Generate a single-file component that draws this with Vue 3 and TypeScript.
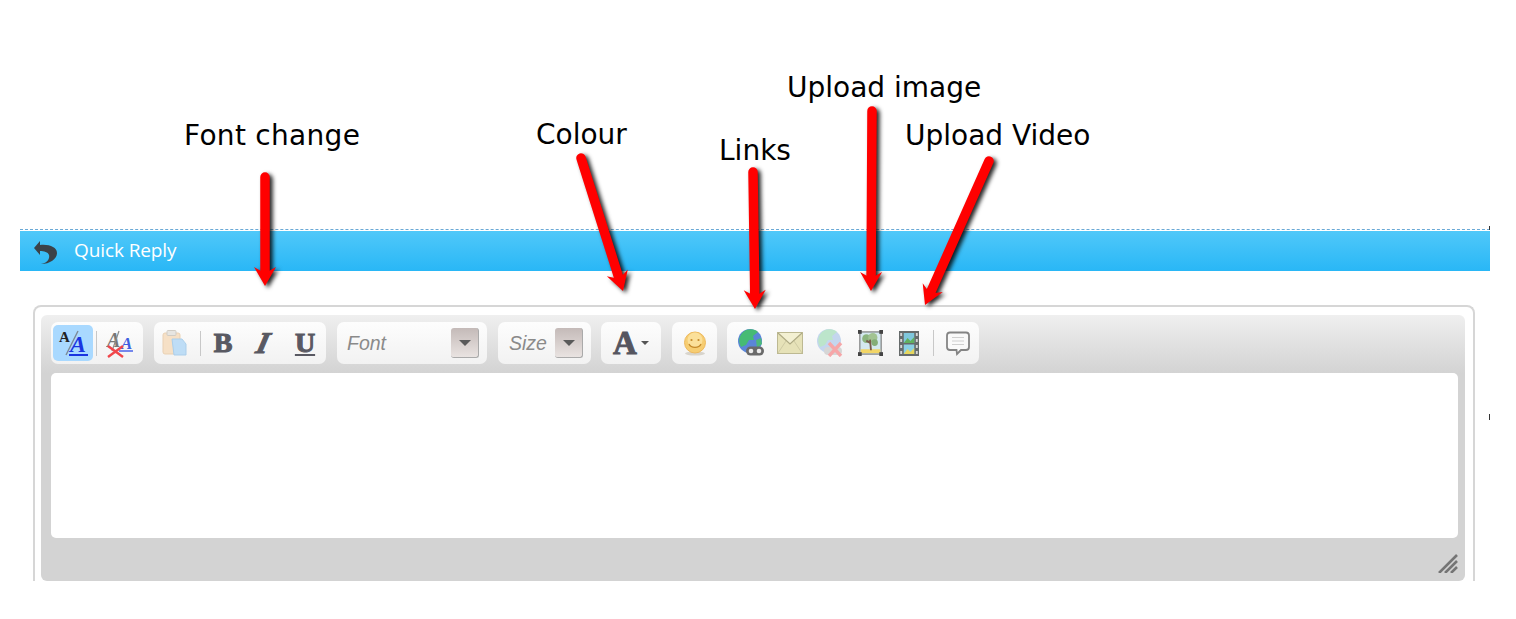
<script setup lang="ts">
interface Arrow { x1: number; y1: number; x2: number; y2: number }
const arrowData: Arrow[] = [
  { x1: 265, y1: 177, x2: 265, y2: 286 },
  { x1: 581, y1: 158, x2: 623, y2: 291 },
  { x1: 753, y1: 172, x2: 755, y2: 309 },
  { x1: 872, y1: 111, x2: 871, y2: 291 },
  { x1: 989, y1: 161, x2: 925, y2: 305 },
]
const arrows = arrowData.map((a) => {
  const dx = a.x2 - a.x1
  const dy = a.y2 - a.y1
  const len = Math.hypot(dx, dy)
  const ux = dx / len
  const uy = dy / len
  const pt = (back: number, side: number) =>
    `${(a.x2 - ux * back - uy * side).toFixed(1)},${(a.y2 - uy * back + ux * side).toFixed(1)}`
  return {
    ...a,
    sx: a.x2 - ux * 12,
    sy: a.y2 - uy * 12,
    head: [pt(0, 0), pt(19, 11), pt(15, 4), pt(15, -4), pt(19, -11)].join(' '),
  }
})
const labels = [
  { text: 'Font change', cls: 'l-font' },
  { text: 'Colour', cls: 'l-colour' },
  { text: 'Links', cls: 'l-links' },
  { text: 'Upload image', cls: 'l-image' },
  { text: 'Upload Video', cls: 'l-video' },
]
</script>

<template>
  <div class="page">
    <header class="bar">
      <svg class="back" width="26" height="28" viewBox="0 0 26 28">
        <path d="M1 9 L7 2 L7 6 C16 5 24 8 24 14 C24 20 17 25 8 25 C14 24 17 20 16 16 C15 13 11 12 7 12 L7 16 Z" fill="#3b4248" />
      </svg>
      <span class="bar-title">Quick Reply</span>
    </header>

    <section class="box">
      <div class="editor">
        <div class="toolbar">
          <div class="group g1">
            <span class="btn active">
              <svg width="32" height="30" viewBox="0 0 32 30">
                <text x="2" y="14" class="ser small">A</text>
                <path d="M21 3 L9 27" stroke="#7d8a96" stroke-width="1.4" />
                <text x="13" y="24" class="ser blue">A</text>
                <path d="M12 27 H31" stroke="#1a35e0" stroke-width="2" />
              </svg>
            </span>
            <i class="sep"></i>
            <span class="btn s2">
              <svg width="28" height="30" viewBox="0 0 28 30">
                <text x="1" y="19" class="ser grey">A</text>
                <path d="M13 3 L6 23" stroke="#8a8a8a" stroke-width="1.2" />
                <text x="15" y="21" class="ser blue2">A</text>
                <path d="M13 23 H27" stroke="#4a62e8" stroke-width="1.6" />
                <path d="M2 18 L17 29 M17 18 L2 29" stroke="#f0454a" stroke-width="2.4" />
              </svg>
            </span>
          </div>

          <div class="group g2">
            <span class="btn paste">
              <svg width="26" height="28" viewBox="0 0 26 28">
                <rect x="1" y="4" width="17" height="21" rx="2" fill="#f6dfc4" stroke="#e9cfb0" />
                <rect x="5" y="1.5" width="9" height="5" rx="1" fill="#e6e4e0" stroke="#cfcac2" />
                <path d="M10 10 H20 L24 15 V26 H12 Z" fill="#bcdcf6" stroke="#a8cdea" />
              </svg>
            </span>
            <i class="sep"></i>
            <span class="fmt b">B</span>
            <span class="fmt it">I</span>
            <span class="fmt u">U</span>
          </div>

          <div class="group g3">
            <span class="select-label">Font</span>
            <span class="drop"><b class="tri"></b></span>
          </div>

          <div class="group g4">
            <span class="select-label">Size</span>
            <span class="drop"><b class="tri"></b></span>
          </div>

          <div class="group g5">
            <span class="big-a">A</span>
            <b class="caret"></b>
          </div>

          <div class="group g6">
            <svg width="26" height="26" viewBox="0 0 26 26">
              <ellipse cx="13" cy="23.5" rx="10" ry="2" fill="#d8d4cc" />
              <circle cx="13" cy="12.5" r="10.5" fill="#f6cd72" stroke="#eeb95c" />
              <circle cx="13" cy="10" r="7.5" fill="#fbe09a" />
              <circle cx="9.5" cy="10" r="1.1" fill="#c58a2a" />
              <circle cx="16.5" cy="10" r="1.1" fill="#c58a2a" />
              <path d="M7 14 C9 18.5 17 18.5 19 14" fill="none" stroke="#c58a2a" stroke-width="1.3" />
            </svg>
          </div>

          <div class="group g7">
            <svg class="ic" width="27" height="28" viewBox="0 0 27 28">
              <circle cx="12" cy="12" r="12" fill="#5b86d8" />
              <path d="M5 3 C10 -1 17 0 20 3 L15 7 L16 11 L11 11 L8 16 L3 18 C0 12 1 7 5 3 Z" fill="#46bb74" />
              <path d="M18 11 L23 9 L24 15 L19 19 Z" fill="#4cb87c" />
              <rect x="8" y="17.5" width="18" height="9" rx="4.5" fill="#6a6a6a" />
              <circle cx="13" cy="22" r="2.3" fill="#ececec" />
              <circle cx="21" cy="22" r="2.3" fill="#ececec" />
            </svg>
            <svg class="ic mail" width="26" height="22" viewBox="0 0 26 22">
              <rect x="0.5" y="0.5" width="25" height="21" fill="#e6e2b8" stroke="#bdb992" />
              <path d="M1 1 L13 12 L25 1" fill="#f3f0d2" stroke="#aeaa84" stroke-width="1.2" />
              <path d="M1 21 L9 9 M25 21 L17 9" stroke="#cfcba4" stroke-width="1" />
            </svg>
            <svg class="ic g2nd" width="26" height="28" viewBox="0 0 26 28">
              <circle cx="12" cy="12" r="12" fill="#c4d6ee" />
              <path d="M5 3 C10 -1 17 0 20 3 L15 7 L16 11 L11 11 L8 16 L3 18 C0 12 1 7 5 3 Z" fill="#bce5cb" />
              <rect x="7" y="18" width="18" height="8" rx="4" fill="#d6d6d6" />
              <path d="M12 14 L24 27 M24 14 L12 27" stroke="#f6a6a8" stroke-width="3.4" />
            </svg>
            <svg class="ic pic" width="25" height="26" viewBox="0 0 27 27" preserveAspectRatio="none">
              <rect x="2" y="2" width="23" height="23" fill="#d4e8ef" stroke="#777" stroke-width="1.2" />
              <rect x="3" y="20" width="21" height="4" fill="#f2d566" />
              <circle cx="9" cy="9" r="4.5" fill="#8bb47e" />
              <circle cx="16" cy="8" r="5" fill="#a2c392" />
              <circle cx="18" cy="13" r="3.5" fill="#84ad77" />
              <path d="M13 10 L14 21 M14 14 L9 11" stroke="#7a5a4c" stroke-width="2" />
              <rect x="0" y="0" width="4" height="4" fill="#444" />
              <rect x="23" y="0" width="4" height="4" fill="#444" />
              <rect x="0" y="23" width="4" height="4" fill="#444" />
              <rect x="23" y="23" width="4" height="4" fill="#444" />
            </svg>
            <svg class="ic film" width="20" height="25" viewBox="0 0 21 25" preserveAspectRatio="none">
              <rect x="0" y="0" width="21" height="25" fill="#666b6b" />
              <rect x="5" y="2" width="11" height="10" fill="#7fc7dc" />
              <path d="M5 12 L9 7 L12 10 L16 6 V12 Z" fill="#62b05f" />
              <rect x="5" y="13.5" width="11" height="9.5" fill="#8ad0e4" />
              <path d="M5 23 L9 18 L12 21 L16 17 V23 Z" fill="#e6d65e" />
              <g fill="#d6d6d6">
                <rect x="1.3" y="2" width="2" height="3" /><rect x="1.3" y="8" width="2" height="3" /><rect x="1.3" y="14" width="2" height="3" /><rect x="1.3" y="20" width="2" height="3" />
                <rect x="17.7" y="2" width="2" height="3" /><rect x="17.7" y="8" width="2" height="3" /><rect x="17.7" y="14" width="2" height="3" /><rect x="17.7" y="20" width="2" height="3" />
              </g>
            </svg>
            <i class="sep"></i>
            <svg class="ic comment" width="24" height="25" viewBox="0 0 24 25">
              <path d="M4 1.5 H20 C22 1.5 23 2.5 23 4.5 V16 C23 18 22 19 20 19 H15 L11 23 L10.5 19 H4 C2 19 1 18 1 16 V4.5 C1 2.5 2 1.5 4 1.5 Z" fill="#fafafa" stroke="#848484" stroke-width="1.8" />
              <path d="M6 6.5 H18 M6 10 H18 M6 13.5 H18" stroke="#d0d0d0" stroke-width="1.2" />
            </svg>
          </div>
        </div>

        <div class="area"></div>

        <div class="foot">
          <svg width="20" height="19" viewBox="0 0 20 19">
            <path d="M1 19 L19 1 M7 19 L19 7 M13 19 L19 13" stroke="#757575" stroke-width="2.6" />
          </svg>
        </div>
      </div>
    </section>

    <svg class="arrows" width="1516" height="619" viewBox="0 0 1516 619">
      <g v-for="(a, i) in arrows" :key="i">
        <line :x1="a.x1" :y1="a.y1" :x2="a.sx" :y2="a.sy" stroke="#ff0000" stroke-width="9.5" stroke-linecap="round" />
        <polygon :points="a.head" fill="#ff0000" />
      </g>
    </svg>

    <span v-for="l in labels" :key="l.text" class="label" :class="l.cls">{{ l.text }}</span>
    <i class="tick t1"></i>
    <i class="tick t2"></i>
  </div>
</template>

<style>
html, body { margin: 0; background: #fff; }
</style>

<style scoped>
.page {
  position: relative;
  width: 1516px;
  height: 619px;
  overflow: hidden;
  padding-top: 229px;
  box-sizing: border-box;
  background: #fff;
  font-family: "DejaVu Sans", sans-serif;
}
.bar {
  margin-left: 20px;
  width: 1470px;
  height: 42px;
  box-sizing: border-box;
  border-top: 1px dashed #6aa9d6;
  padding: 1px 0 0;
  background: linear-gradient(#50c8f9, #29b7f6) content-box;
  display: flex;
  align-items: center;
  gap: 15px;
}
.back { filter: blur(0.6px); margin: 4px 0 0 13px; }
.bar-title {
  color: #fff;
  font-size: 19px;
  font-weight: 500;
  font-family: "Open Sans", sans-serif;
  letter-spacing: -0.1px;
  margin-bottom: 3px;
}
.box {
  margin: 34px 0 0 33px;
  width: 1442px;
  height: 276px;
  box-sizing: border-box;
  border: 2px solid #d6d6d6;
  border-bottom: 0;
  border-radius: 8px 8px 0 0;
  padding: 8px 8px 0 6px;
}
.editor {
  height: 266px;
  border-radius: 6px;
  background: linear-gradient(#efefef 0, #d3d3d3 58px);
  padding: 0 7px 0 10px;
  box-sizing: border-box;
  overflow: hidden;
}
.toolbar {
  height: 58px;
  padding-top: 7px;
  box-sizing: border-box;
  display: flex;
  align-items: flex-start;
}
.group {
  height: 42px;
  box-sizing: border-box;
  border-radius: 7px;
  background: linear-gradient(#fdfdfd, #f2f2f2);
  display: flex;
  align-items: center;
  margin-right: 11px;
  flex: none;
}
.g1 { width: 92px; padding-left: 2px; }
.g2 { width: 172px; padding-left: 8px; }
.g3 { width: 150px; padding-left: 10px; justify-content: space-between; padding-right: 8px; }
.g4 { width: 93px; padding-left: 11px; justify-content: space-between; padding-right: 8px; margin-right: 10px; }
.g5 { width: 60px; padding-left: 12px; }
.g6 { width: 45px; justify-content: center; margin-right: 10px; }
.g7 { width: 252px; padding-left: 11px; }
.btn { display: flex; align-items: center; justify-content: center; flex: none; }
.active {
  width: 40px;
  height: 36px;
  border-radius: 5px;
  background: #a9d9ff;
}
.s2 { width: 28px; margin-left: 9px; }
.sep {
  display: block;
  flex: none;
  width: 1px;
  height: 25px;
  background: #c8c8c8;
  margin-left: 3px;
}
.paste { opacity: 0.95; filter: blur(0.4px); }
.g2 .sep { margin-left: 12px; }
.ser { font-family: "Liberation Serif", serif; font-weight: 700; }
.small { font-size: 15px; fill: #222; }
.blue { font-size: 24px; font-style: italic; fill: #1a35e0; }
.grey { font-size: 20px; font-style: italic; fill: #777; }
.blue2 { font-size: 17px; font-style: italic; fill: #3f5fe0; }
.fmt {
  font-family: "Liberation Serif", serif;
  font-weight: 700;
  color: #595962;
  font-size: 28px;
  line-height: 1;
  width: 40px;
  text-align: center;
  flex: none;
  -webkit-text-stroke: 1.1px #595962;
}
.b { margin-left: 2px; }
.it { transform: skewX(-14deg); font-style: italic; font-size: 30px; }
.u { text-decoration: underline; text-decoration-thickness: 2px; text-underline-offset: 2px; margin-left: 2px; }
.select-label {
  font-family: "Liberation Sans", sans-serif;
  font-style: italic;
  color: #8a8a8a;
  font-size: 19.5px;
}
.drop {
  width: 28px;
  height: 30px;
  box-sizing: border-box;
  border-radius: 3px;
  background: linear-gradient(#c4bab8, #e9e3e1);
  border-right: 1px solid #aaa;
  border-bottom: 1px solid #aaa;
  display: flex;
  align-items: center;
  justify-content: center;
}
.tri {
  width: 0;
  height: 0;
  border-left: 6px solid transparent;
  border-right: 6px solid transparent;
  border-top: 6px solid #5a5a5a;
}
.big-a {
  font-family: "Liberation Serif", serif;
  font-weight: 700;
  font-size: 33px;
  line-height: 1;
  color: #55555f;
  -webkit-text-stroke: 1px #55555f;
}
.caret {
  margin-left: 4px;
  width: 0;
  height: 0;
  border-left: 4px solid transparent;
  border-right: 4px solid transparent;
  border-top: 4px solid #555;
}
.ic { flex: none; filter: blur(0.35px); }
.mail { margin-left: 12px; }
.g2nd { margin-left: 14px; }
.pic { margin-left: 15px; }
.film { margin-left: 16px; }
.g7 .sep { margin-left: 14px; height: 26px; }
.comment { margin-left: 12px; }
.area {
  height: 165px;
  background: #fff;
  border-radius: 5px;
}
.foot {
  display: flex;
  justify-content: flex-end;
  padding-top: 16px;
}
.arrows {
  position: absolute;
  left: 0;
  top: 0;
  filter: drop-shadow(3px 2px 2px rgba(0, 0, 0, 0.85));
}
.label {
  position: absolute;
  font-family: "DejaVu Sans", sans-serif;
  font-size: 28px;
  line-height: 36px;
  color: #000;
  white-space: nowrap;
}
.l-font { left: 184px; top: 118px; letter-spacing: 0.3px; }
.l-colour { left: 536px; top: 117px; }
.l-links { left: 719px; top: 133px; }
.l-image { left: 787px; top: 70px; }
.l-video { left: 905px; top: 118px; }
.tick { position: absolute; width: 1px; background: #333; left: 1489px; }
.t1 { top: 226px; height: 4px; }
.t2 { top: 414px; height: 6px; }
</style>
